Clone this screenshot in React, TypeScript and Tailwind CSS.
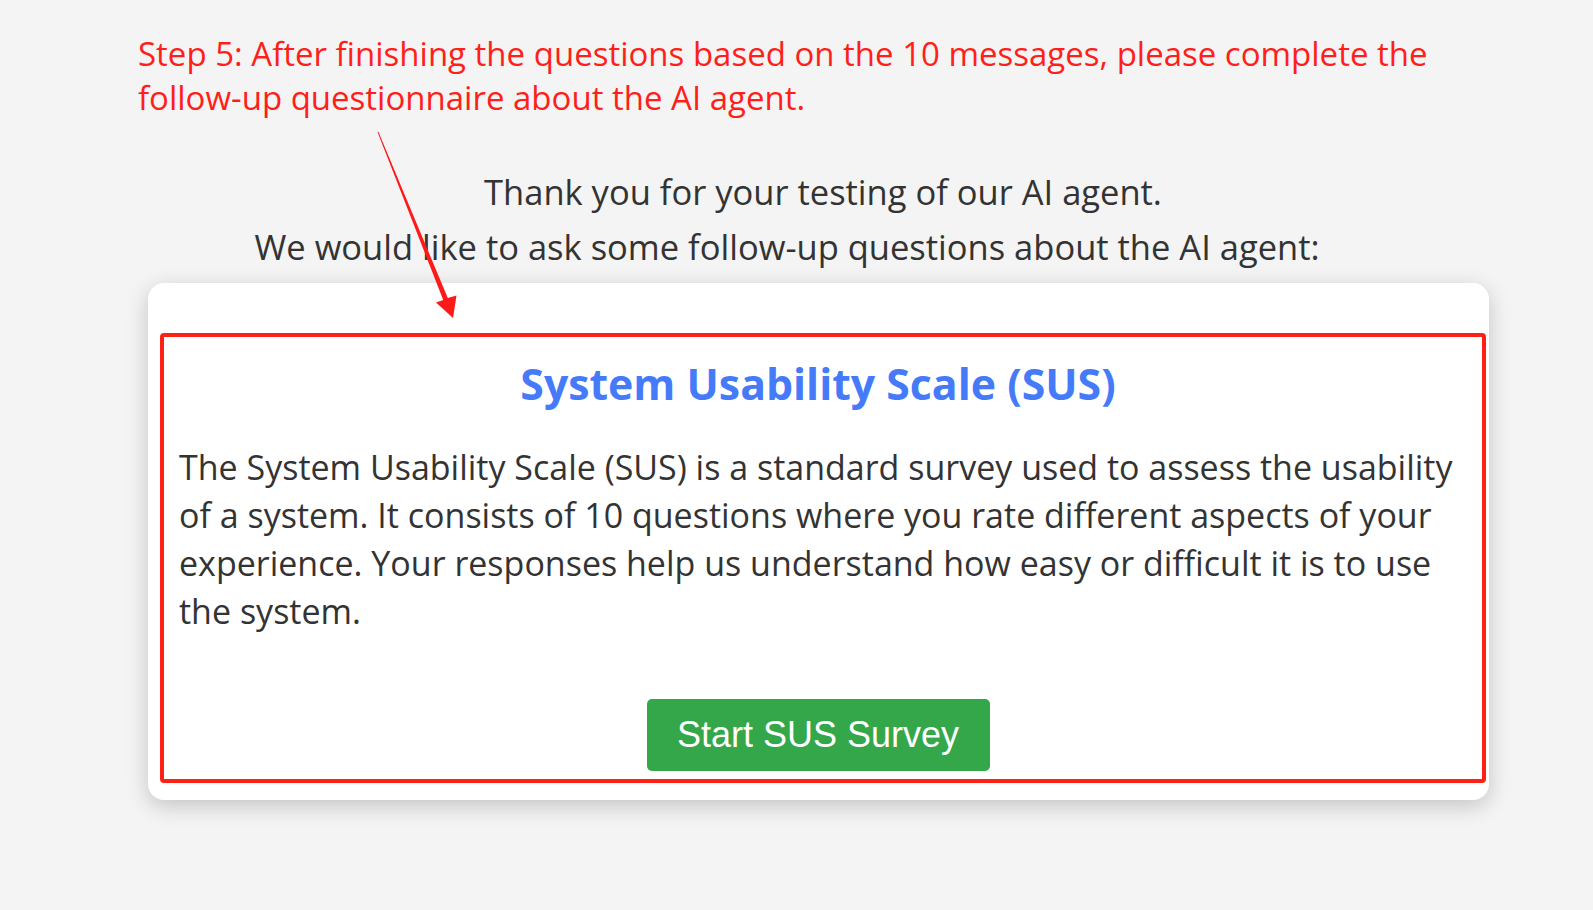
import React from "react";

const FONT = { fontFamily: '"Open Sans", "Noto Sans", sans-serif' };

export default function App() {
  return (
    <div className="relative min-h-screen w-full bg-[#f4f4f4] text-[#333333]" style={FONT}>
      {/* Annotation */}
      <p className="pl-[138px] pt-[32px] w-[1460px] text-[33px] leading-[44px] text-[#ff1f1a]">
        Step 5: After finishing the questions based on the 10 messages, please complete the
        follow-up questionnaire about the AI agent.
      </p>

      {/* Intro */}
      <div className="ml-[148px] w-[1341px] mt-[44px] text-center text-[34.5px] leading-[55px]">
        <p className="pl-[9px]">Thank you for your testing of our AI agent.</p>
        <p className="pr-[63px]">We would like to ask some follow-up questions about the AI agent:</p>
      </div>

      {/* Card */}
      <section className="ml-[148px] mt-[9px] w-[1341px] rounded-2xl bg-white pt-[50px] pl-[12px] pr-[3px] pb-[17px] shadow-[0_6px_22px_rgba(0,0,0,0.2)]">
        <div className="flex flex-col items-center rounded-[4px] border-4 border-[#ff2016] pt-[22px] pb-[8px] pl-[15px] pr-[25px]">
          <h2 className="text-[42.8px] leading-[50px] font-bold text-[#457bf9]">
            System Usability Scale (SUS)
          </h2>
          <p className="mt-[34px] self-stretch text-[34px] leading-[48px]">
            The System Usability Scale (SUS) is a standard survey used to assess the usability of a
            system. It consists of 10 questions where you rate different aspects of your experience.
            Your responses help us understand how easy or difficult it is to use the system.
          </p>
          <button
            className="mt-[64px] h-[72px] w-[343px] rounded-[5px] bg-[#33a74a] text-[36px] text-white"
            style={{ fontFamily: '"Liberation Sans", Arial, sans-serif' }}
          >
            Start SUS Survey
          </button>
        </div>
      </section>

      {/* Arrow overlay */}
      <svg
        className="pointer-events-none absolute left-0 top-0"
        width="1593"
        height="910"
        viewBox="0 0 1593 910"
      >
        <polygon
          fill="#ff1a1a"
          points="378.4,131.8 447.8,298.1 456.5,295.5 453,318 436,302.5 443.2,299.9 377.6,132.2"
        />
      </svg>
    </div>
  );
}
